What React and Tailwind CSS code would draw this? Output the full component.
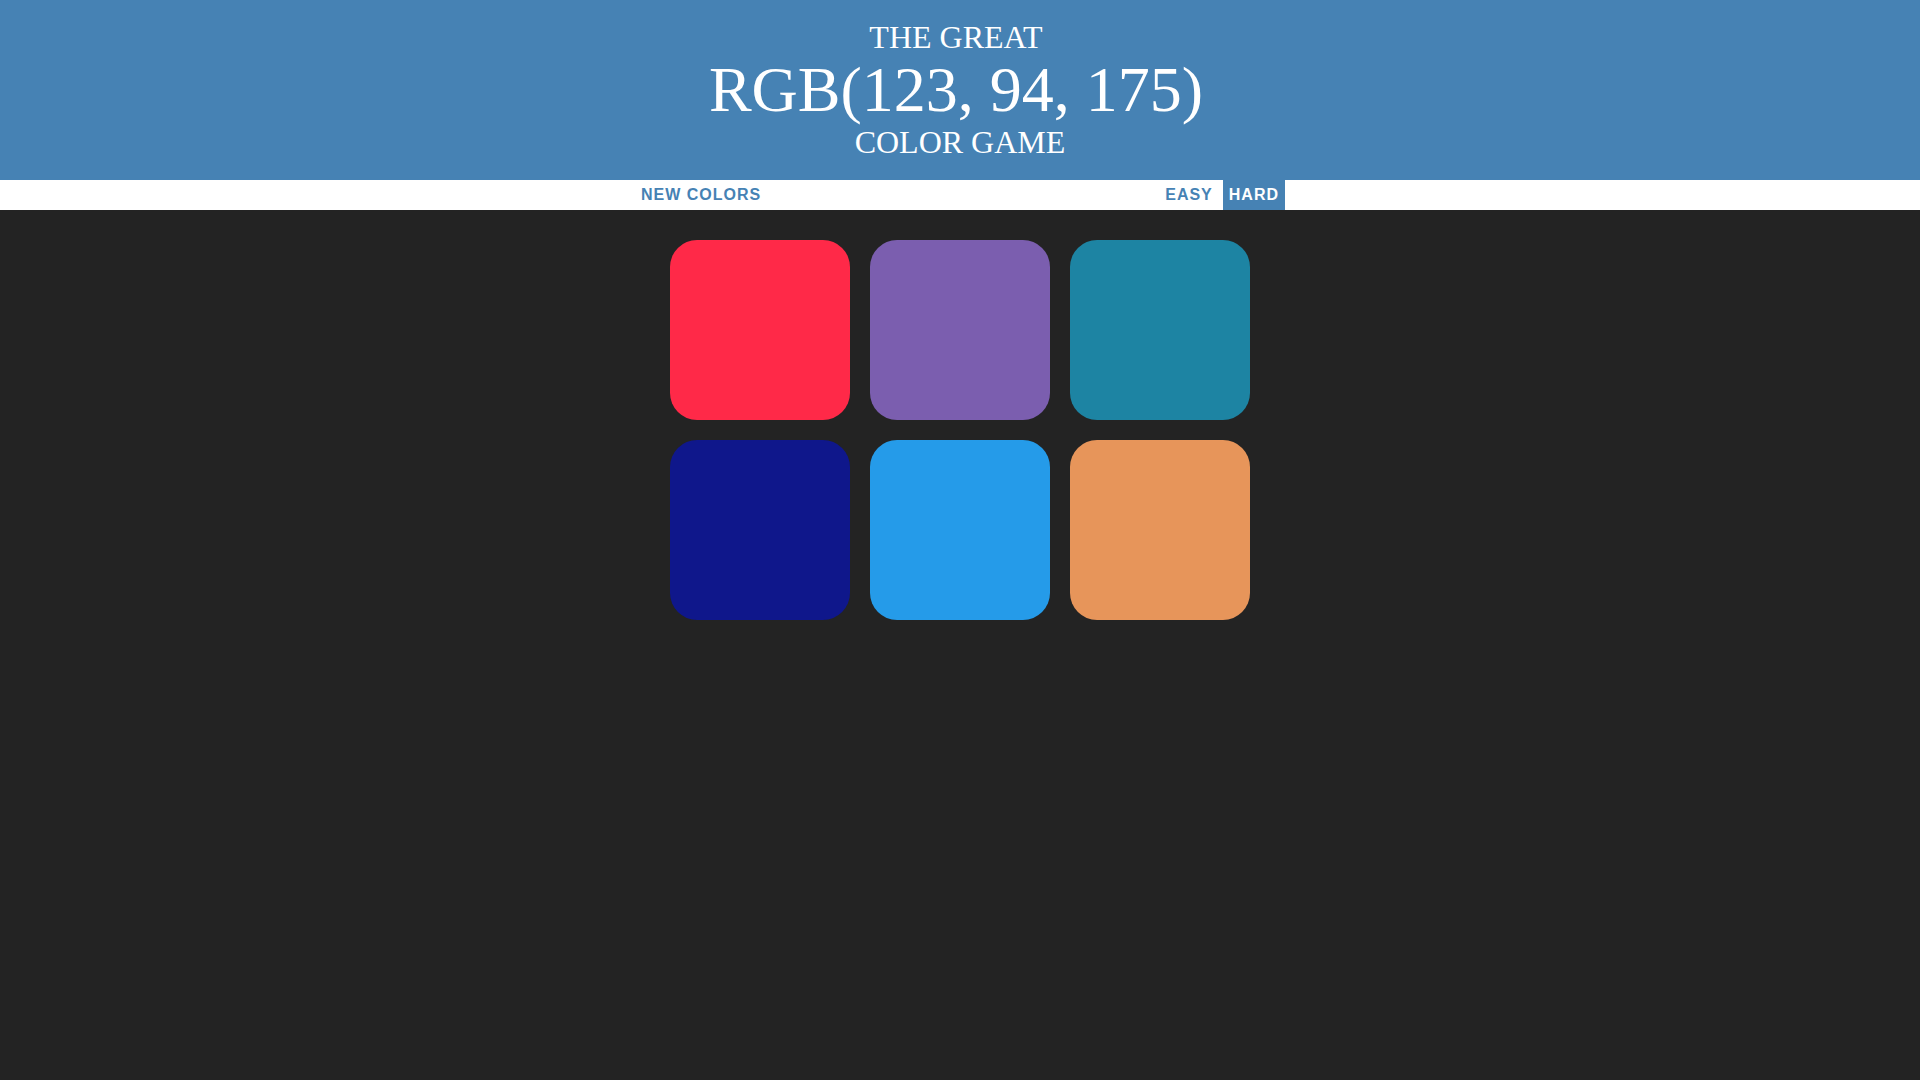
const squares = ["#ff2948", "#7b5eaf", "#1d84a3", "#0f178b", "#259be9", "#e7955a"];

export default function App() {
  return (
    <div className="min-h-screen bg-[#232323] font-['Liberation_Serif',serif]">
      <h1 className="bg-[#4682b4] py-5 text-center text-[32px] font-normal uppercase leading-[1.1] text-white">
        <div className="pr-2">The Great</div>
        <div className="pr-2 text-[64px] leading-[69.6px]">RGB(123, 94, 175)</div>
        <div>Color Game</div>
      </h1>

      <div className="flex h-[30px] justify-center gap-1 bg-white font-['Liberation_Sans',Arial,sans-serif] text-[16px]">
        <Btn>New Colors</Btn>
        <span className="w-[384px]"></span>
        <Btn>Easy</Btn>
        <Btn selected>Hard</Btn>
      </div>

      <div className="mx-auto mt-5 flex w-[600px] flex-wrap">
        {squares.map((c, i) => (
          <div
            key={i}
            className="m-[10px] h-[180px] w-[180px] rounded-[15%]"
            style={{ backgroundColor: c }}
          />
        ))}
      </div>
    </div>
  );
}

function Btn({ children, selected }) {
  return (
    <button
      className={
        selected
          ? "h-full bg-[#4682b4] px-[6px] py-px font-bold uppercase tracking-[1px] text-white"
          : "h-full px-[6px] py-px font-bold uppercase tracking-[1px] text-[#4682b4]"
      }
    >
      {children}
    </button>
  );
}
